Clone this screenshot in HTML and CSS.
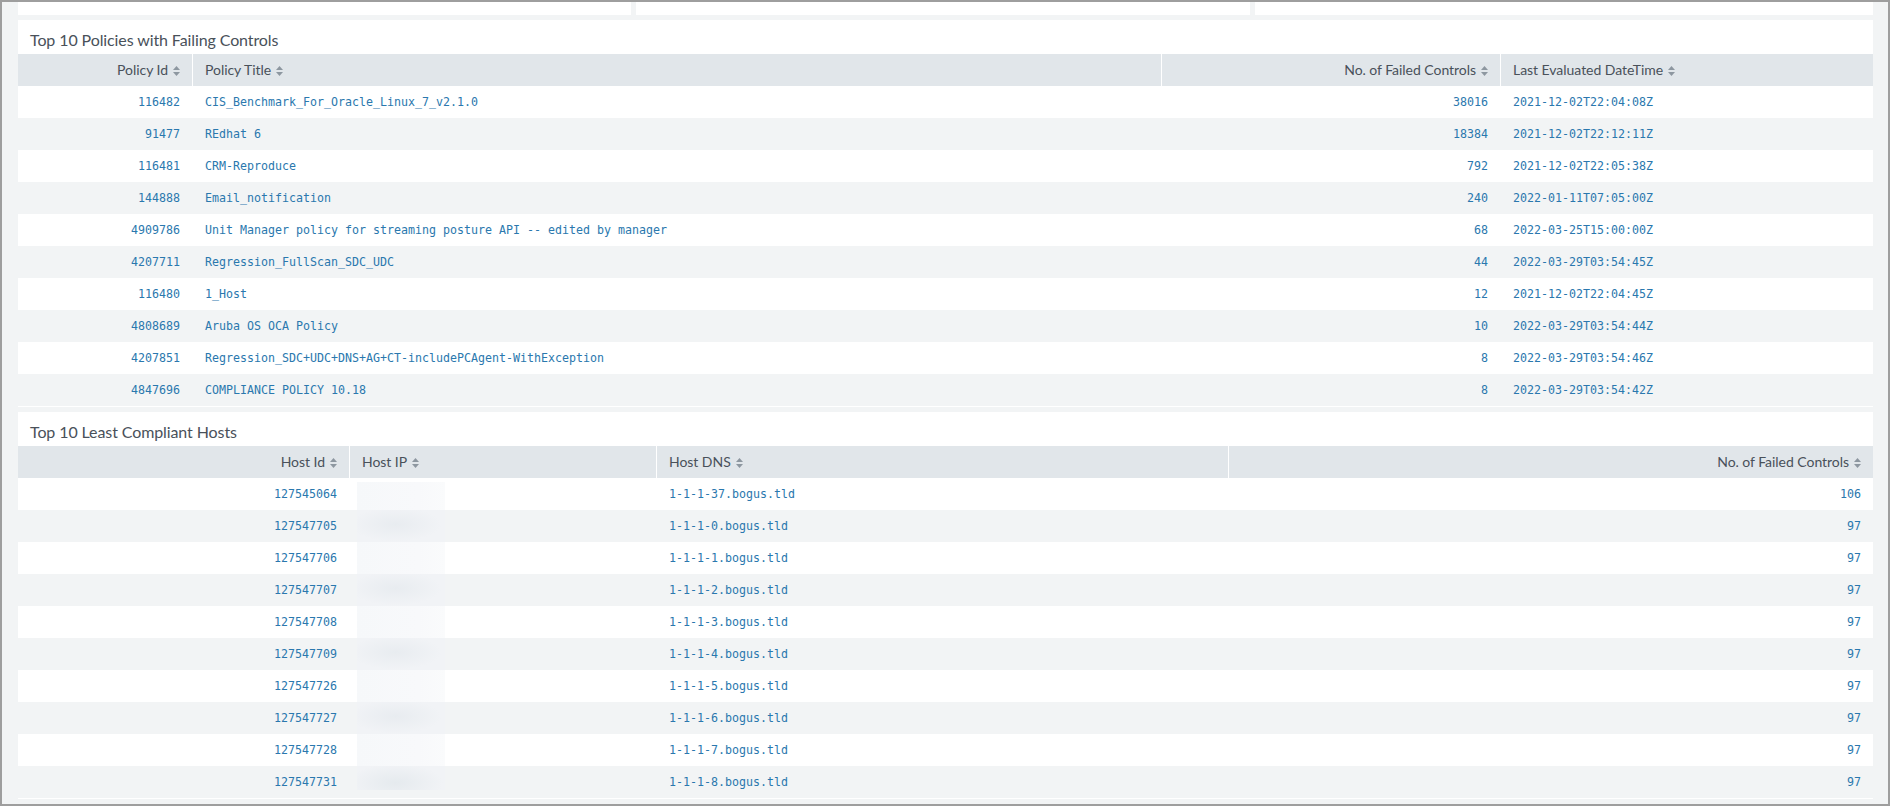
FILE: index.html
```html
<!DOCTYPE html>
<html lang="en">
<head>
<meta charset="utf-8">
<title>Compliance dashboard</title>
<link rel="stylesheet" href="styles.css">
</head>
<body>
<svg class="defs" width="0" height="0" aria-hidden="true"><symbol id="sort" viewBox="0 0 7 10"><path d="M3.5 0 7 4H0zM3.5 10 0 6h7z"/></symbol></svg>
<div class="frame">
  <div class="top-row"><div class="stub"></div><div class="stub"></div><div class="stub"></div></div>

  <section class="panel">
    <h2 class="panel-title">Top 10 Policies with Failing Controls</h2>
    <table class="grid policies">
      <colgroup><col class="p1"><col class="p2"><col class="p3"><col class="p4"></colgroup>
      <thead><tr>
        <th class="num">Policy Id<svg class="sort"><use href="#sort"/></svg></th>
        <th>Policy Title<svg class="sort"><use href="#sort"/></svg></th>
        <th class="num">No. of Failed Controls<svg class="sort"><use href="#sort"/></svg></th>
        <th>Last Evaluated DateTime<svg class="sort"><use href="#sort"/></svg></th>
      </tr></thead>
      <tbody>
        <tr><td class="num">116482</td><td>CIS_Benchmark_For_Oracle_Linux_7_v2.1.0</td><td class="num">38016</td><td>2021-12-02T22:04:08Z</td></tr>
        <tr><td class="num">91477</td><td>REdhat 6</td><td class="num">18384</td><td>2021-12-02T22:12:11Z</td></tr>
        <tr><td class="num">116481</td><td>CRM-Reproduce</td><td class="num">792</td><td>2021-12-02T22:05:38Z</td></tr>
        <tr><td class="num">144888</td><td>Email_notification</td><td class="num">240</td><td>2022-01-11T07:05:00Z</td></tr>
        <tr><td class="num">4909786</td><td>Unit Manager policy for streaming posture API -- edited by manager</td><td class="num">68</td><td>2022-03-25T15:00:00Z</td></tr>
        <tr><td class="num">4207711</td><td>Regression_FullScan_SDC_UDC</td><td class="num">44</td><td>2022-03-29T03:54:45Z</td></tr>
        <tr><td class="num">116480</td><td>1_Host</td><td class="num">12</td><td>2021-12-02T22:04:45Z</td></tr>
        <tr><td class="num">4808689</td><td>Aruba OS OCA Policy</td><td class="num">10</td><td>2022-03-29T03:54:44Z</td></tr>
        <tr><td class="num">4207851</td><td>Regression_SDC+UDC+DNS+AG+CT-includePCAgent-WithException</td><td class="num">8</td><td>2022-03-29T03:54:46Z</td></tr>
        <tr><td class="num">4847696</td><td>COMPLIANCE POLICY 10.18</td><td class="num">8</td><td>2022-03-29T03:54:42Z</td></tr>
      </tbody>
    </table>
  </section>

  <section class="panel">
    <h2 class="panel-title">Top 10 Least Compliant Hosts</h2>
    <table class="grid hosts">
      <colgroup><col class="h1"><col class="h2"><col class="h3"><col class="h4"></colgroup>
      <thead><tr>
        <th class="num">Host Id<svg class="sort"><use href="#sort"/></svg></th>
        <th>Host IP<svg class="sort"><use href="#sort"/></svg></th>
        <th>Host DNS<svg class="sort"><use href="#sort"/></svg></th>
        <th class="num">No. of Failed Controls<svg class="sort"><use href="#sort"/></svg></th>
      </tr></thead>
      <tbody>
        <tr><td class="num">127545064</td><td class="ip"><div class="redact"></div></td><td>1-1-1-37.bogus.tld</td><td class="num">106</td></tr>
        <tr><td class="num">127547705</td><td class="ip"><div class="redact"></div></td><td>1-1-1-0.bogus.tld</td><td class="num">97</td></tr>
        <tr><td class="num">127547706</td><td class="ip"><div class="redact"></div></td><td>1-1-1-1.bogus.tld</td><td class="num">97</td></tr>
        <tr><td class="num">127547707</td><td class="ip"><div class="redact"></div></td><td>1-1-1-2.bogus.tld</td><td class="num">97</td></tr>
        <tr><td class="num">127547708</td><td class="ip"><div class="redact"></div></td><td>1-1-1-3.bogus.tld</td><td class="num">97</td></tr>
        <tr><td class="num">127547709</td><td class="ip"><div class="redact"></div></td><td>1-1-1-4.bogus.tld</td><td class="num">97</td></tr>
        <tr><td class="num">127547726</td><td class="ip"><div class="redact"></div></td><td>1-1-1-5.bogus.tld</td><td class="num">97</td></tr>
        <tr><td class="num">127547727</td><td class="ip"><div class="redact"></div></td><td>1-1-1-6.bogus.tld</td><td class="num">97</td></tr>
        <tr><td class="num">127547728</td><td class="ip"><div class="redact"></div></td><td>1-1-1-7.bogus.tld</td><td class="num">97</td></tr>
        <tr><td class="num">127547731</td><td class="ip"><div class="redact"></div></td><td>1-1-1-8.bogus.tld</td><td class="num">97</td></tr>
      </tbody>
    </table>
  </section>
</div>
</body>
</html>
```
FILE: styles.css
```css
* { box-sizing: border-box; }
html, body { margin: 0; padding: 0; }
body { background: #f2f4f5; overflow: hidden; }
.defs { position: absolute; }

.frame {
  width: 1890px;
  height: 806px;
  border: 2px solid #9e9e9e;
  padding: 0 15px 0 16px;
  background: #f2f4f5;
  overflow: hidden;
}

.top-row { display: grid; grid-template-columns: 613px 614px 618px; column-gap: 5px; height: 13px; margin-bottom: 5px; }
.stub { background: #fff; }

.panel { background: #fff; padding-bottom: 1px; margin-bottom: 5px; }
.panel-title {
  margin: 0;
  height: 34px;
  padding: 8px 0 0 12px;
  font: 400 16px/24px Lato, "Liberation Sans", sans-serif;
  letter-spacing: -0.1px;
  color: #49515a;
}

.grid { width: 1855px; border-collapse: separate; border-spacing: 0; table-layout: fixed; }
.p1 { width: 174px; }
.p2 { width: 969px; }
.p3 { width: 339px; }
.p4 { width: 373px; }
.h1 { width: 331px; }
.h2 { width: 307px; }
.h3 { width: 572px; }
.h4 { width: 645px; }

.grid th {
  height: 32px;
  padding: 0 12px;
  background: #e1e6ea;
  border-left: 1px solid #fff;
  font: 400 14px/20px Lato, "Liberation Sans", sans-serif;
  letter-spacing: -0.04px;
  color: #49515a;
  text-align: left;
  white-space: nowrap;
}
.grid th:first-child { border-left: 0; }
.grid .num { text-align: right; }

.sort { width: 7px; height: 10px; margin-left: 5px; vertical-align: -1px; fill: #8d97a0; }

.grid td {
  height: 32px;
  padding: 0 12px 0 13px;
  font: 400 11.63px/16px "DejaVu Sans Mono", "Liberation Mono", monospace;
  color: #2a78ae;
  white-space: pre;
}
.grid tbody tr:nth-child(even) td { background: #f2f4f5; }

.grid td.ip { padding: 0 0 0 8px; vertical-align: top; }
.redact {
  width: 88px;
  height: 32px;
  background: linear-gradient(90deg, #f6f8fa, #f8f9fb 70%, #fafbfc);
}
.grid tbody tr:nth-child(even) .redact {
  background: radial-gradient(ellipse 48px 18px at 44% 45%, #e8ecf0, #f1f3f6 95%);
}
.grid tbody tr:first-child .redact { margin-top: 4px; height: 28px; }
.grid tbody tr:last-child .redact { height: 24px; background: radial-gradient(ellipse 50px 20px at 44% 70%, #e5eaee, #f1f3f6 95%); }
```
